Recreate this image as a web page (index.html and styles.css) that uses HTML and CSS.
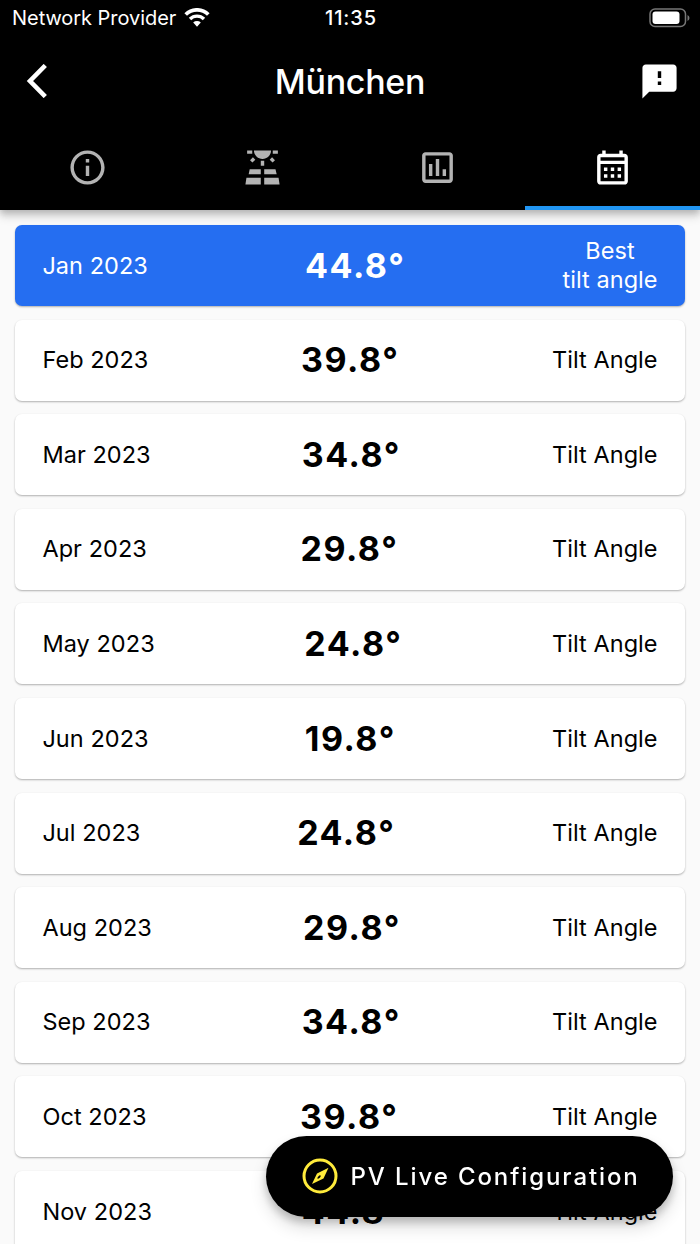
FILE: index.html
```
<!DOCTYPE html>
<html lang="en">
  <head>
    <meta charset="utf-8">
    <title>München</title>
    <link rel="stylesheet" href="styles.css">
  </head>
  <body>
    <header class="header">
      <div class="status-bar">
        <div class="carrier">
          <span>Network Provider</span>
          <svg class="wifi" viewBox="0 0 26 19">
            <path d="M1.7 6.5a16 16 0 0 1 22.6 0" fill="none" stroke="#fff" stroke-width="3.7"/>
            <path d="M6 11a10 10 0 0 1 14 0" fill="none" stroke="#fff" stroke-width="3.4"/>
            <path d="M9.2 14.6a5.6 5.6 0 0 1 7.6 0L13 18.7z" fill="#fff"/>
          </svg>
        </div>
        <div class="time">11:35</div>
        <svg class="battery" viewBox="0 0 42 20">
          <rect x="1" y="1" width="35.5" height="17.5" rx="5" fill="none" stroke="#777" stroke-width="1.5"/>
          <rect x="3.5" y="3.5" width="27" height="12.5" rx="3" fill="#fff"/>
          <path d="M38.5 7v6q2-1 2-3t-2-3z" fill="#777"/>
        </svg>
      </div>
      <div class="title-bar">
        <svg class="back" viewBox="0 0 22 34">
          <path d="M19.3 1.5L4 17l15.3 15.5" fill="none" stroke="#fff" stroke-width="4.6"/>
        </svg>
        <h1>München</h1>
        <svg class="icon feedback" viewBox="0 0 24 24">
          <path d="M20 2H4c-1.1 0-1.99.9-1.99 2L2 22l4-4h14c1.1 0 2-.9 2-2V4c0-1.1-.9-2-2-2zm-7 12h-2v-2h2v2zm0-4h-2V6h2v4z"/>
        </svg>
      </div>
      <nav class="tabs">
        <div class="tab">
          <svg class="icon" viewBox="0 0 24 24">
            <path d="M11 7h2v2h-2zm0 4h2v6h-2zm1-9C6.48 2 2 6.48 2 12s4.48 10 10 10 10-4.48 10-10S17.52 2 12 2zm0 18c-4.41 0-8-3.59-8-8s3.59-8 8-8 8 3.59 8 8-3.59 8-8 8z"/>
          </svg>
        </div>
        <div class="tab">
          <svg class="icon" viewBox="0 0 24 24">
            <path d="M3.9 16H11v-3H4.5zM13 16h7.3l-.7-3H13zM21.4 18H13v4h9zM2 22h9v-4H2.6zM11 8h2v3h-2zM3 2h3v2H3zM18 2h3v2h-3zM7 2c0 2.76 2.24 5 5 5s5-2.24 5-5z"/>
            <path d="M16.2 7.4l1.4-1.4 1.7 1.7-1.4 1.4zM4.7 7.7L6.4 6l1.4 1.4-1.7 1.7z"/>
          </svg>
        </div>
        <div class="tab">
          <svg class="icon" viewBox="0 0 24 24">
            <path d="M19 3H5c-1.1 0-2 .9-2 2v14c0 1.1.9 2 2 2h14c1.1 0 2-.9 2-2V5c0-1.1-.9-2-2-2zm0 16H5V5h14v14zM7 10h2v7H7zM11 7h2v10h-2zM15 13h2v4h-2z"/>
          </svg>
        </div>
        <div class="tab active">
          <svg class="icon" viewBox="0 0 24 24">
            <path d="M19 4h-1V2h-2v2H8V2H6v2H5c-1.11 0-1.99.9-1.99 2L3 20c0 1.1.89 2 2 2h14c1.1 0 2-.9 2-2V6c0-1.1-.9-2-2-2zm0 16H5V10h14v10zm0-12H5V6h14v2zM9 14H7v-2h2v2zm4 0h-2v-2h2v2zm4 0h-2v-2h2v2zm-8 4H7v-2h2v2zm4 0h-2v-2h2v2zm4 0h-2v-2h2v2z"/>
          </svg>
        </div>
      </nav>
    </header>

    <main class="list">
      <div class="card best">
        <span>Jan 2023</span>
        <span class="angle">44.8°</span>
        <span class="label">Best<br>tilt angle</span>
      </div>
      <div class="card">
        <span>Feb 2023</span>
        <span class="angle">39.8°</span>
        <span class="label">Tilt Angle</span>
      </div>
      <div class="card">
        <span>Mar 2023</span>
        <span class="angle">34.8°</span>
        <span class="label">Tilt Angle</span>
      </div>
      <div class="card">
        <span>Apr 2023</span>
        <span class="angle">29.8°</span>
        <span class="label">Tilt Angle</span>
      </div>
      <div class="card">
        <span>May 2023</span>
        <span class="angle">24.8°</span>
        <span class="label">Tilt Angle</span>
      </div>
      <div class="card">
        <span>Jun 2023</span>
        <span class="angle">19.8°</span>
        <span class="label">Tilt Angle</span>
      </div>
      <div class="card">
        <span>Jul 2023</span>
        <span class="angle">24.8°</span>
        <span class="label">Tilt Angle</span>
      </div>
      <div class="card">
        <span>Aug 2023</span>
        <span class="angle">29.8°</span>
        <span class="label">Tilt Angle</span>
      </div>
      <div class="card">
        <span>Sep 2023</span>
        <span class="angle">34.8°</span>
        <span class="label">Tilt Angle</span>
      </div>
      <div class="card">
        <span>Oct 2023</span>
        <span class="angle">39.8°</span>
        <span class="label">Tilt Angle</span>
      </div>
      <div class="card">
        <span>Nov 2023</span>
        <span class="angle">44.8°</span>
        <span class="label">Tilt Angle</span>
      </div>
    </main>

    <button class="fab">
      <svg class="compass" viewBox="0 0 36 36">
        <circle cx="18" cy="18" r="16" fill="none" stroke="#ffeb3b" stroke-width="3"/>
        <path fill="#ffeb3b" fill-rule="evenodd" d="M26.5 9.7L15 15.5 10 26l11.5-5.5zM18.6 17.4q.6 1-.8 2.3t-2.3 1q-.5-.9.8-2.3t2.3-1z"/>
      </svg>
      <span>PV Live Configuration</span>
    </button>
  </body>
</html>
```
FILE: styles.css
```
* {
  box-sizing: border-box;
}

body {
  margin: 0;
  height: 1244px;
  overflow: hidden;
  background-color: #fafafa;
  color: #000;
  font-family: Inter, "Liberation Sans", sans-serif;
}

.header {
  position: relative;
  height: 209.5px;
  background-color: #000;
  color: #fff;
  box-shadow: 0 3px 7px rgba(0, 0, 0, 0.2), 0 7px 9px rgba(0, 0, 0, 0.12);
}

/* status bar */
.status-bar {
  display: grid;
  grid-template-columns: 1fr auto 1fr;
  align-items: center;
  height: 36px;
  padding: 0 10px 0 12px;
  font-size: 20px;
}

.carrier {
  display: flex;
  align-items: center;
  gap: 8px;
  letter-spacing: -0.05px;
}

.wifi {
  width: 26px;
  height: 19px;
  margin-top: -2px;
}

.time {
  font-weight: 500;
  letter-spacing: 0.9px;
}

.battery {
  width: 42px;
  height: 20px;
  margin: -1px -1px 0 0;
  justify-self: end;
}

/* title */
.title-bar {
  display: flex;
  align-items: center;
  justify-content: space-between;
  height: 90px;
  padding: 0 20px 0 26px;
}

.title-bar h1 {
  margin: 0;
  font-size: 34px;
  font-weight: 500;
  letter-spacing: -0.3px;
}

.back {
  width: 22px;
  height: 34px;
  margin-right: 13px;
}

.icon {
  display: block;
  width: 41px;
  height: 41px;
  fill: currentColor;
}

/* tabs */
.tabs {
  display: flex;
  height: 83.5px;
}

.tab {
  flex: 1;
  display: flex;
  align-items: center;
  justify-content: center;
  padding-top: 4px;
  border-bottom: 4px solid transparent;
  color: #b3b3b3;
}

.tab.active {
  color: #fff;
  border-bottom-color: #2196f3;
}

/* months */
.list {
  display: flex;
  flex-direction: column;
  gap: 13.6px;
  padding: 15.5px 15.4px 0;
}

.card {
  display: flex;
  flex-shrink: 0;
  align-items: center;
  justify-content: space-between;
  height: 81px;
  padding: 1px 27px 0;
  border-radius: 7px;
  background-color: #fff;
  box-shadow: 0 1px 2px rgba(0, 0, 0, 0.3);
  font-size: 23.5px;
  line-height: 28.6px;
  letter-spacing: 0.05px;
}

.card.best {
  background-color: #256ef1;
  color: #fff;
}

.angle {
  font-size: 34px;
  font-weight: 650;
  letter-spacing: 1.5px;
}

.label {
  text-align: center;
}

.fab {
  position: fixed;
  right: 27.5px;
  bottom: 27px;
  display: flex;
  align-items: center;
  gap: 13px;
  width: 407px;
  height: 81px;
  padding: 0 36px 1px;
  border: none;
  border-radius: 41px;
  background-color: #000;
  color: #fff;
  font-family: inherit;
  font-size: 24px;
  font-weight: 500;
  letter-spacing: 1.9px;
  white-space: nowrap;
  box-shadow: 0 5px 9px rgba(0, 0, 0, 0.2), 0 10px 17px rgba(0, 0, 0, 0.14);
}

.compass {
  flex-shrink: 0;
  width: 36px;
  height: 36px;
}
```
